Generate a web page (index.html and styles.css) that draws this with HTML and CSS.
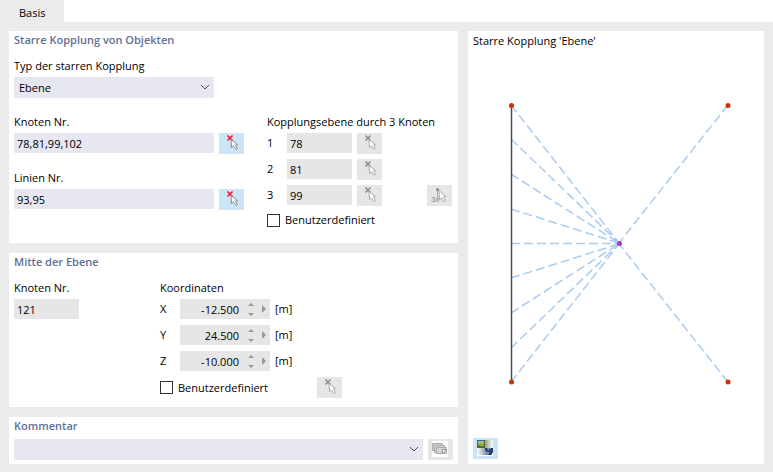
FILE: index.html
```html
<!DOCTYPE html>
<html lang="de">
<head>
  <meta charset="UTF-8" />
  <meta name="viewport" content="width=device-width, initial-scale=1.0"/>
  <title>Starre Kopplung</title>
  <link rel="stylesheet" href="styles.css">
</head>
<body>
  <svg class="defs" width="0" height="0" aria-hidden="true">
    <symbol id="pick" viewBox="0 0 25 21">
      <path class="cross" d="M8.500 2.500l5 5M13.500 2.500l-5 5"/>
      <path class="arrow" d="M12 6.500l.5 8 2-1.500 2.500 3.500 1.500-1-2-3.500 2-.5z"/>
    </symbol>
    <symbol id="chevron" viewBox="0 0 10 6">
      <path d="M1 1l4 4 4-4"/>
    </symbol>
  </svg>

  <nav class="tabs">
    <a class="tab" href="#basis">Basis</a>
  </nav>

  <main class="content" id="basis">
    <form class="settings">
      <section class="panel coupling">
        <h2>Starre Kopplung von Objekten</h2>
        <div class="field type">
          <label for="type">Typ der starren Kopplung</label>
          <div class="dropdown">
            <select id="type"><option>Ebene</option></select>
            <svg class="chevron"><use href="#chevron"/></svg>
          </div>
        </div>
        <div class="columns">
          <div class="stack">
            <div class="field">
              <label for="nodes">Knoten Nr.</label>
              <div class="row">
                <input class="wide" id="nodes" type="text" value="78,81,99,102">
                <button class="icon active" type="button" aria-label="Knoten wählen"><svg><use href="#pick"/></svg></button>
              </div>
            </div>
            <div class="field">
              <label for="lines">Linien Nr.</label>
              <div class="row">
                <input class="wide" id="lines" type="text" value="93,95">
                <button class="icon active" type="button" aria-label="Linien wählen"><svg><use href="#pick"/></svg></button>
              </div>
            </div>
          </div>
          <fieldset class="field plane">
            <legend>Kopplungsebene durch 3 Knoten</legend>
            <div class="rows">
              <div class="row">
                <label class="index" for="node1">1</label>
                <input id="node1" type="text" value="78" readonly>
                <button class="icon" type="button" aria-label="Knoten 1 wählen"><svg><use href="#pick"/></svg></button>
              </div>
              <div class="row">
                <label class="index" for="node2">2</label>
                <input id="node2" type="text" value="81" readonly>
                <button class="icon" type="button" aria-label="Knoten 2 wählen"><svg><use href="#pick"/></svg></button>
              </div>
              <div class="row">
                <label class="index" for="node3">3</label>
                <input id="node3" type="text" value="99" readonly>
                <button class="icon" type="button" aria-label="Knoten 3 wählen"><svg><use href="#pick"/></svg></button>
                <button class="icon last" type="button" aria-label="3 Knoten wählen">
                  <svg viewBox="0 0 25 21">
                    <path class="line" d="M10.500 5v8"/>
                    <circle class="dot" cx="10.500" cy="4.500" r="1.500"/>
                    <path class="arrow" d="M12 5.500l.5 9 2-1.500 2.500 4 1.500-1-2-4 2-.5z"/>
                    <text class="times" x="4" y="17">3x</text>
                  </svg>
                </button>
              </div>
              <label class="check"><input type="checkbox">Benutzerdefiniert</label>
            </div>
          </fieldset>
        </div>
      </section>

      <section class="panel center">
        <h2>Mitte der Ebene</h2>
        <div class="columns">
          <div class="field center-node">
            <label for="center">Knoten Nr.</label>
            <input id="center" type="text" value="121" readonly>
          </div>
          <fieldset class="field">
            <legend>Koordinaten</legend>
            <div class="rows">
              <div class="row">
                <label class="index" for="x">X</label>
                <div class="spin">
                  <input id="x" type="text" value="-12.500" readonly>
                  <button class="step" type="button" aria-label="X ändern"><svg viewBox="0 0 14 20"><path d="M4 7h6L7 4zM4 14h6l-3 3z"/></svg></button>
                  <button class="more" type="button" aria-label="X Optionen"><svg viewBox="0 0 10 20"><path d="M4 6v8l4-4z"/></svg></button>
                </div>
                <span>[m]</span>
              </div>
              <div class="row">
                <label class="index" for="y">Y</label>
                <div class="spin">
                  <input id="y" type="text" value="24.500" readonly>
                  <button class="step" type="button" aria-label="Y ändern"><svg viewBox="0 0 14 20"><path d="M4 7h6L7 4zM4 14h6l-3 3z"/></svg></button>
                  <button class="more" type="button" aria-label="Y Optionen"><svg viewBox="0 0 10 20"><path d="M4 6v8l4-4z"/></svg></button>
                </div>
                <span>[m]</span>
              </div>
              <div class="row">
                <label class="index" for="z">Z</label>
                <div class="spin">
                  <input id="z" type="text" value="-10.000" readonly>
                  <button class="step" type="button" aria-label="Z ändern"><svg viewBox="0 0 14 20"><path d="M4 7h6L7 4zM4 14h6l-3 3z"/></svg></button>
                  <button class="more" type="button" aria-label="Z Optionen"><svg viewBox="0 0 10 20"><path d="M4 6v8l4-4z"/></svg></button>
                </div>
                <span>[m]</span>
              </div>
              <div class="row pick-center">
                <label class="check"><input type="checkbox">Benutzerdefiniert</label>
                <button class="icon" type="button" aria-label="Mitte wählen"><svg><use href="#pick"/></svg></button>
              </div>
            </div>
          </fieldset>
        </div>
      </section>

      <section class="panel comment">
        <h2><label for="comment">Kommentar</label></h2>
        <div class="row">
          <div class="dropdown">
            <select id="comment"><option></option></select>
            <svg class="chevron"><use href="#chevron"/></svg>
          </div>
          <button class="icon" type="button" aria-label="Kommentare">
            <svg viewBox="0 0 25 21">
              <path fill="#fff" d="M4 2h16v16H4z"/>
              <g fill="#d4d4d4" stroke="#aaa">
                <path d="M4.500 4.500h10v7h-10z"/>
                <path d="M6.500 6.500h10v7h-10z"/>
                <path d="M8.500 8.500h10v6h-10z"/>
              </g>
              <path fill="#fff" stroke="#999" d="M14.500 10.500h4l-4 4z"/>
            </svg>
          </button>
        </div>
      </section>
    </form>

    <section class="panel preview">
      <h3>Starre Kopplung 'Ebene'</h3>
      <svg class="drawing" viewBox="0 0 286 387">
        <g class="links">
          <path d="M38 54L146 192"/>
          <path d="M38 88L146 192"/>
          <path d="M38 123L146 192"/>
          <path d="M38 158L146 192"/>
          <path d="M38 192.500H146"/>
          <path d="M38 227L146 193"/>
          <path d="M38 262L146 193"/>
          <path d="M38 297L146 193"/>
          <path d="M38 331L146 193"/>
          <path d="M255 54L146 192"/>
          <path d="M255 331L146 193"/>
        </g>
        <path class="member" d="M38.500 54V331"/>
        <g class="nodes">
          <circle cx="38.500" cy="54.500" r="2.500"/>
          <circle cx="255" cy="54.500" r="2.500"/>
          <circle cx="38.500" cy="331" r="2.500"/>
          <circle cx="255" cy="331" r="2.500"/>
          <circle class="middle" cx="146.500" cy="192.500" r="2.500"/>
        </g>
      </svg>
      <button class="icon active" type="button" aria-label="Bild wechseln">
        <svg viewBox="0 0 25 21">
          <defs>
            <linearGradient id="fade-out"><stop stop-color="#8fa08f"/><stop offset="1" stop-color="#fff"/></linearGradient>
            <linearGradient id="fade-in"><stop stop-color="#fff"/><stop offset="1" stop-color="#8a96a0"/></linearGradient>
          </defs>
          <path fill="#fff" d="M4 2h16v16H4z"/>
          <path fill="url(#fade-out)" d="M12 2h8v8h-8z"/>
          <path fill="url(#fade-in)" d="M4 10h9v7H4z"/>
          <path fill="#4c6b3c" d="M4 2h8v8H4z"/>
          <path fill="#7cc0d8" d="M5 3h6v2H5z"/>
          <path fill="#6fa83c" d="M5 5h6v3H5z"/>
          <path fill="#e8c040" d="M6 5h2v1H6zM9 4h1v2H9zM8 7h2v1H8z"/>
          <path fill="#c0502c" d="M5 7h1v1H5z"/>
          <path fill="#6f8fbf" d="M12 10h7v7h-6l-1-3z"/>
          <path fill="#233a63" d="M12 10h2l1 3 3-3h2v4l-2 3h-3l2-3h-3l-2-2z"/>
        </svg>
      </button>
    </section>
  </main>
</body>
</html>
```
FILE: styles.css
```css
* {
  box-sizing: border-box;
}

body {
  margin: 0;
  min-height: 100vh;
  display: flex;
  flex-direction: column;
  background: #ebebeb;
  color: #000;
  font-family: "Open Sans", "Noto Sans", sans-serif;
  font-size: 11px;
  line-height: 18px;
}

.defs {
  position: absolute;
}

.tabs {
  display: flex;
  background: #fff;
}

.tab {
  padding: 4px 19px 0;
  background: #ebebeb;
  color: #000;
  text-decoration: none;
}

.content {
  flex: 1;
  display: grid;
  grid-template-columns: 449fr 296fr;
  gap: 10px;
  padding: 9px 9px 8px;
}

.settings {
  display: flex;
  flex-direction: column;
  gap: 10px;
}

.panel {
  padding: 0 5px;
  background: #fff;
}

h2 {
  margin: 0 0 8px;
  color: #5f6f95;
  font-size: 11px;
  font-weight: 600;
}

h3 {
  margin: 0;
  font-size: 11px;
  font-weight: normal;
  line-height: 20px;
}

fieldset {
  margin: 0;
  padding: 0;
  border: 0;
  min-width: 0;
}

legend {
  padding: 0;
}

.field > label,
legend {
  display: block;
  margin-bottom: 2px;
}

.coupling {
  padding-bottom: 14px;
}

.type {
  width: 200px;
  margin-bottom: 15px;
}

.columns {
  display: flex;
}

.stack {
  display: flex;
  flex-direction: column;
  gap: 15px;
  width: 253px;
}

.plane {
  flex: 1;
}

.rows {
  display: flex;
  flex-direction: column;
  gap: 5px;
}

.row {
  display: flex;
  gap: 5px;
  min-height: 21px;
}

.index {
  width: 15px;
}

.row > span,
.index {
  line-height: 20px;
}

input[type="text"] {
  width: 65px;
  height: 20px;
  padding: 0 3px;
  border: 0;
  background: #e6e6e6;
  color: #000;
  font: inherit;
}

input.wide {
  width: 200px;
  background: #e7e7f2;
}

.dropdown {
  position: relative;
  flex: 1;
}

select {
  display: block;
  appearance: none;
  width: 100%;
  height: 21px;
  padding: 0 20px 0 5px;
  border: 0;
  border-radius: 0;
  background: #e7e7f2;
  color: #000;
  font: inherit;
}

.chevron {
  position: absolute;
  right: 4px;
  top: 7px;
  width: 10px;
  height: 6px;
  fill: none;
  stroke: #555;
  pointer-events: none;
}

.icon {
  width: 25px;
  height: 21px;
  padding: 0;
  border: 0;
  background: #e6e6e6;
  --cross: #888;
  --arrow: #aaa;
}

.icon.active {
  background: #cce4f7;
  --cross: #e8142a;
  --arrow: #888;
}

.icon svg {
  display: block;
  width: 25px;
  height: 21px;
}

.cross {
  fill: none;
  stroke: var(--cross);
  stroke-width: 1.5;
}

.arrow {
  fill: #fff;
  stroke: var(--arrow);
}

.line {
  stroke: #aaa;
}

.dot {
  fill: #888;
}

.times {
  fill: #888;
  font-size: 8px;
}

.last {
  margin-left: auto;
  margin-right: 1px;
}

.check {
  display: flex;
  align-items: center;
  gap: 5px;
}

.check input {
  appearance: none;
  width: 13px;
  height: 13px;
  margin: 0;
  border: 1px solid #333;
  background: #fff;
}

.center {
  padding-bottom: 9px;
}

.center-node {
  width: 146px;
}

.spin {
  display: flex;
  width: 90px;
  height: 20px;
  padding-right: 2px;
  background: #e6e6e6;
}

.spin input[type="text"] {
  width: 64px;
  padding: 0 5px 0 0;
  text-align: right;
}

.step,
.more {
  width: 14px;
  padding: 0;
  border: 0;
  background: none;
}

.more {
  width: 10px;
}

.spin svg {
  display: block;
  height: 20px;
  fill: #999;
}

.pick-center {
  justify-content: space-between;
  width: 182px;
}

.comment {
  padding-bottom: 4px;
}

.comment h2 {
  margin-bottom: 4px;
}

.preview {
  display: flex;
  flex-direction: column;
  padding-bottom: 5px;
}

.drawing {
  flex: 1;
  width: 100%;
  min-height: 0;
}

.links {
  fill: none;
  stroke: #a9cdf0;
  stroke-width: 1.5;
  stroke-dasharray: 9 4;
}

.member {
  stroke: #4d4860;
  stroke-width: 1.5;
}

.nodes {
  fill: #cc3300;
}

.middle {
  fill: #b030c8;
}
```
